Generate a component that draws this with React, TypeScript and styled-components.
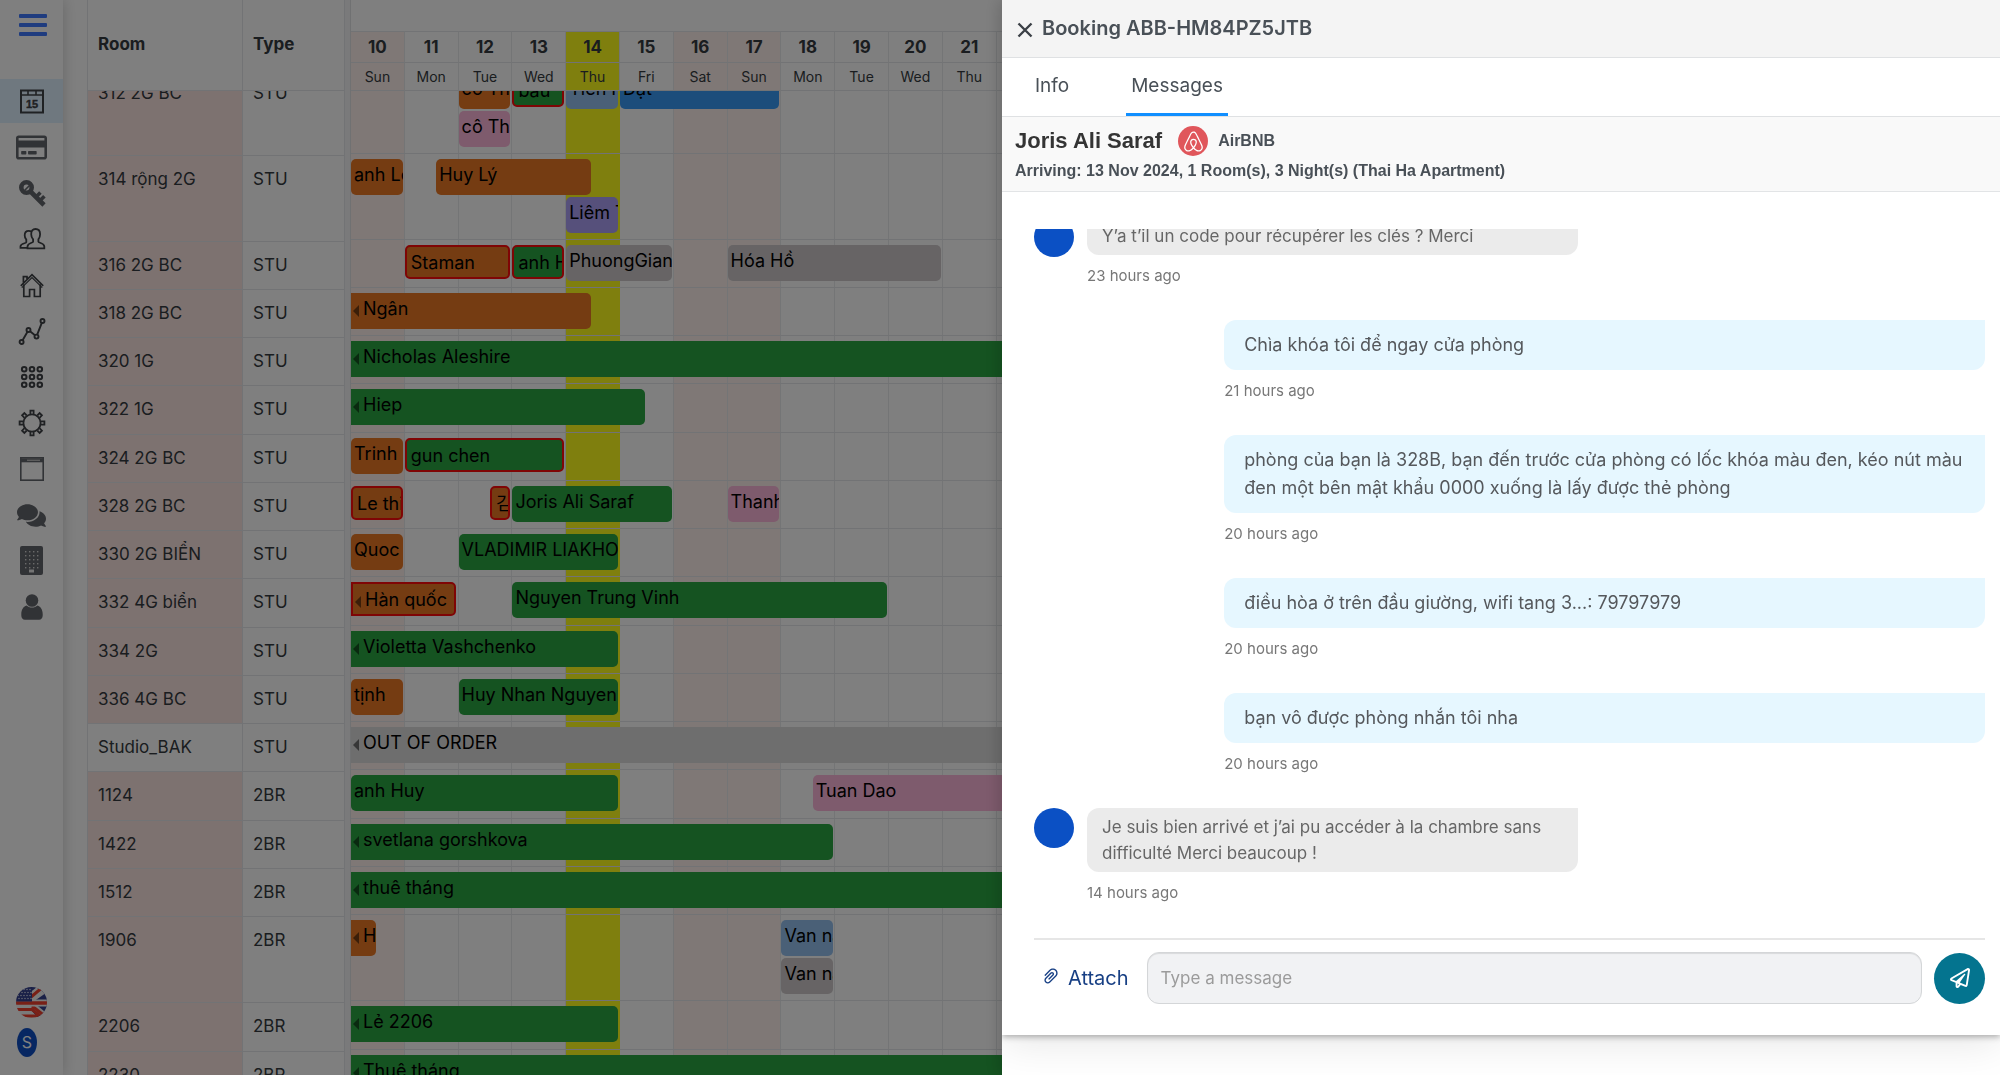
import React from "react";
import styled, { createGlobalStyle, css } from "styled-components";
import { FaAirbnb, FaComments, FaRegCreditCard, FaRegPaperPlane } from "react-icons/fa";
import { AiOutlinePaperClip } from "react-icons/ai";

const sans = `Inter, "Noto Sans CJK KR", sans-serif`;
const arial = `"Liberation Sans", Arial, sans-serif`;

const GlobalStyle = createGlobalStyle`
  *, *::before, *::after { box-sizing: border-box; }
  body { margin: 0; background: #fff; font-family: ${sans}; color: #343a40; }
  button, input { font: inherit; color: inherit; }
`;

/* ---------- page ---------- */

const Page = styled.div`
  display: flex;
  height: 100vh;
  overflow: hidden;
  isolation: isolate;
`;

const Backdrop = styled.div`
  position: fixed;
  z-index: 1;
  inset: 0;
  background: rgba(0, 0, 0, 0.5);
`;

/* ---------- sidebar ---------- */

const Sidebar = styled.nav`
  position: relative;
  z-index: 1;
  display: flex;
  flex: none;
  flex-direction: column;
  width: 63px;
  background: #fff;
  box-shadow: 0 0 14px rgba(0, 0, 0, 0.2);
`;

const MenuButton = styled.button`
  display: flex;
  flex-direction: column;
  gap: 5px;
  width: 28px;
  margin: 14px 0 43px 19px;
  padding: 0;
  border: 0;
  background: none;
`;

const MenuBar = styled.span`
  height: 4px;
  border-radius: 1px;
  background: #3f78ff;
`;

const NavLink = styled.a<{ $active?: boolean; $muted?: boolean }>`
  display: flex;
  align-items: center;
  justify-content: center;
  height: 44px;
  margin-bottom: 2px;
  color: ${(p) => (p.$muted ? "#63666c" : "#3f4246")};
  background: ${(p) => (p.$active ? "#dff0ff" : "transparent")};
`;

const SidebarFooter = styled.div`
  display: flex;
  flex-direction: column;
  gap: 10px;
  margin: auto 0 18px 16px;
`;

const PlainButton = styled.button`
  display: block;
  width: 31px;
  height: 31px;
  padding: 0;
  border: 0;
  background: none;
`;

const UserBadge = styled.button`
  width: 20px;
  height: 29px;
  margin-left: 1px;
  padding: 0;
  border: 0;
  border-radius: 50%;
  background: #0f4fc4;
  color: #fff;
  font-size: 16px;
  line-height: 29px;
`;

/* ---------- planner ---------- */

const Planner = styled.main`
  display: flex;
  flex: 1;
  min-width: 0;
  padding: 0 35px 0 24px;
`;

const rowSize = css<{ $lanes: number }>`
  height: ${(p) => 10 + p.$lanes * 38}px;
  border-bottom: 1px solid #e4e7ea;

  &:nth-child(4n + 6) {
    height: 49px;
  }
`;

const RoomTable = styled.table`
  display: block;
  flex: none;
  width: 258px;
  border-left: 1px solid #e4e7ea;
  font-size: 17px;
`;

const RoomHead = styled.thead`
  position: relative;
  z-index: 1;
  display: block;
  background: #fff;

  tr {
    display: grid;
    grid-template-columns: 155px 1fr;
    height: 91px;
    border-bottom: 1px solid #e4e7ea;
  }

  th {
    padding: 0 10px;
    border-right: 1px solid #e4e7ea;
    line-height: 88px;
    text-align: left;
    font-weight: 700;
  }
`;

const RoomBody = styled.tbody`
  display: block;
  margin-top: -21px;
`;

const RoomRow = styled.tr<{ $lanes: number }>`
  display: grid;
  grid-template-columns: 155px 1fr;
  ${rowSize}
`;

const RoomCell = styled.td<{ $dirty?: boolean }>`
  padding: 0 10px;
  border-right: 1px solid #e4e7ea;
  line-height: 46px;
  white-space: nowrap;
  background: ${(p) => (p.$dirty ? "#fbe4e1" : "#fff")};
`;

const Splitter = styled.div`
  flex: none;
  width: 6px;
  border-right: 1px solid #e0e2e4;
  background: #f4f5f6;
`;

const Timeline = styled.section`
  position: relative;
  flex: 1;
  min-width: 0;
`;

const DayGrid = styled.div`
  display: grid;
  grid-template-columns: repeat(30, 1fr);
`;

const ColumnLayer = styled(DayGrid)`
  position: absolute;
  inset: 31px 0 0;
`;

type DayKind = "weekend" | "today" | "plain";
const dayColor = { weekend: "#fff1ed", today: "#ffff1c", plain: "#fff" };

const DayColumn = styled.div<{ $kind: DayKind }>`
  border-right: 1px solid ${(p) => (p.$kind === "today" ? "#ffff1c" : "#e8eaec")};
  background: ${(p) => dayColor[p.$kind]};
`;

const TimelineHead = styled.header`
  position: relative;
  z-index: 1;
  padding-top: 31px;
  background: #fff;
`;

const DayNumber = styled.div<{ $kind: DayKind }>`
  height: 31px;
  border-top: 1px solid #e4e7ea;
  border-right: 1px solid #e8eaec;
  background: ${(p) => dayColor[p.$kind]};
  font-size: 17px;
  font-weight: 700;
  line-height: 30px;
  text-align: center;
`;

const DayName = styled(DayNumber)`
  height: 29px;
  border-bottom: 1px solid #e4e7ea;
  font-size: 14px;
  font-weight: 400;
  line-height: 28px;
`;

const TimelineBody = styled.div`
  position: relative;
  margin-top: -23px;
`;

const Lanes = styled.div<{ $lanes: number }>`
  display: grid;
  grid-template-columns: repeat(720, 1fr);
  grid-auto-rows: 36px;
  row-gap: 2px;
  padding-top: 5px;
  ${rowSize}
`;

const barColor = {
  orange: "#ea7824",
  green: "#2aa742",
  pink: "#fdb6da",
  purple: "#aca0f6",
  grey: "#cec9cb",
  closed: "#dcdcdc",
  sky: "#94c0ef",
  blue: "#389af6",
};

const Bar = styled.button<{ $tone: keyof typeof barColor; $alert?: boolean; $open?: boolean }>`
  display: flex;
  align-items: center;
  min-width: 0;
  height: ${(p) => (p.$alert ? 34 : 36)}px;
  padding: ${(p) => (p.$alert ? "1px 0 0 4px" : "0 0 5px 3px")};
  overflow: hidden;
  border: ${(p) => (p.$alert ? "2px solid #ff0a0a" : "0")};
  border-radius: ${(p) => (p.$open ? "0 5px 5px 0" : "5px")};
  background: ${(p) => barColor[p.$tone]};
  color: #000;
  font-size: 18px;
  line-height: 28px;
  white-space: nowrap;

  ${(p) =>
    p.$open &&
    css`
      padding-left: 2px;

      &::before {
        content: "";
        flex: none;
        margin: 5px 4px 0 0;
        border: solid transparent;
        border-width: 6px 6px 6px 0;
        border-right-color: rgba(0, 0, 0, 0.5);
      }
    `}
`;

/* ---------- drawer ---------- */

const Drawer = styled.aside`
  position: fixed;
  z-index: 2;
  inset: 0 0 0 auto;
  width: 49.9%;
  overflow: hidden;
  background: #fff;
  box-shadow: -4px 0 14px rgba(0, 0, 0, 0.15);
`;

const Card = styled.div`
  padding-bottom: 31px;
  background: #fff;
  box-shadow: 0 2px 6px rgba(0, 0, 0, 0.3), 0 8px 40px rgba(0, 0, 0, 0.1);
`;

const DrawerHead = styled.header`
  display: flex;
  align-items: center;
  gap: 9px;
  height: 58px;
  padding: 0 15px;
  border-bottom: 1px solid #dfe1e3;
  background: #f4f4f4;
`;

const CloseButton = styled.button`
  display: flex;
  padding: 3px 0 0;
  border: 0;
  background: none;
`;

const DrawerTitle = styled.h1`
  margin: 0 0 2px;
  color: #495057;
  font-size: 20px;
  font-weight: 600;
  line-height: 28px;
`;

const Tabs = styled.div`
  display: flex;
  gap: 52px;
  height: 59px;
  padding-left: 28px;
  border-bottom: 1px solid #dfe1e3;
`;

const Tab = styled.button<{ $active?: boolean }>`
  height: 58px;
  padding: 0 5px;
  border: 0;
  border-bottom: 3px solid ${(p) => (p.$active ? "#118fff" : "transparent")};
  background: none;
  color: #495057;
  font-size: 19px;
`;

const Guest = styled.section`
  height: 75px;
  padding: 9px 13px 0;
  border-bottom: 1px solid #e2e4e6;
  background: #f9f9f9;
  color: #495057;
  font-family: ${arial};
  font-weight: 700;
`;

const GuestLine = styled.div`
  display: flex;
  align-items: center;
  height: 30px;
`;

const GuestName = styled.h2`
  margin: 0 16px 0 0;
  color: #343434;
  font-size: 22px;
`;

const ChannelLogo = styled.span`
  display: flex;
  align-items: center;
  justify-content: center;
  width: 30px;
  height: 30px;
  margin-right: 10px;
  border-radius: 50%;
  background: #e0565b;
  color: #fff;
`;

const Channel = styled.span`
  font-size: 16px;
`;

const Arrival = styled.p`
  margin: 5px 0 0;
  font-size: 16px;
  line-height: 20px;
`;

const Chat = styled.section`
  margin: 37px 15px 0 32px;
`;

const MessageScroll = styled.div`
  overflow: hidden;
  border-bottom: 2px solid #e6e6e6;
`;

const MessageList = styled.ol`
  display: flex;
  flex-direction: column;
  gap: 33px;
  margin: -12px 0 34px;
  padding: 0;
  list-style: none;
`;

const Message = styled.li<{ $own?: boolean }>`
  display: flex;
  gap: 13px;
  ${(p) => p.$own && "align-self: flex-end; width: 80%;"}
`;

const Avatar = styled.span`
  flex: none;
  width: 40px;
  height: 40px;
  border-radius: 50%;
  background: #0b50c4;
`;

const MessageBody = styled.div<{ $own?: boolean }>`
  flex: 1;
  max-width: ${(p) => (p.$own ? "none" : "491px")};
`;

const Bubble = styled.p<{ $own?: boolean }>`
  margin: 0;
  padding: ${(p) => (p.$own ? "11px 20px" : "6px 15px")};
  border-radius: 12px 0 12px 12px;
  background: ${(p) => (p.$own ? "#e6f7ff" : "#ebebeb")};
  color: ${(p) => (p.$own ? "#55585c" : "#666")};
  font-size: ${(p) => (p.$own ? 18 : 17)}px;
  line-height: ${(p) => (p.$own ? 28 : 26)}px;
`;

const Time = styled.time`
  display: block;
  margin-top: 10px;
  color: #777;
  font-size: 15px;
  line-height: 22px;
`;

const Composer = styled.form`
  display: flex;
  align-items: center;
  gap: 12px;
  padding-top: 12px;
`;

const AttachButton = styled.button`
  display: flex;
  align-items: center;
  gap: 7px;
  padding: 0 6px 0 7px;
  border: 0;
  background: none;
  color: #173f84;
  font-size: 20px;

  svg {
    margin-bottom: 4px;
  }
`;

const MessageInput = styled.input`
  flex: 1;
  min-width: 0;
  height: 52px;
  padding: 0 13px;
  border: 1px solid #d4d6d8;
  border-radius: 12px;
  background: #f1f2f4;
  box-shadow: inset 0 1px 1px rgba(0, 0, 0, 0.1);
  font-size: 17px;

  &::placeholder {
    color: #9b9b9b;
  }
`;

const SendButton = styled.button`
  display: flex;
  align-items: center;
  justify-content: center;
  width: 51px;
  height: 51px;
  padding: 0;
  border: 0;
  border-radius: 50%;
  background: #04748f;
  color: #fff;
`;

/* ---------- icons ---------- */

const Line = ({ size = 28, width = 2, children }: { size?: number; width?: number; children: React.ReactNode }) => (
  <svg width={size} height={size} viewBox="0 0 28 28" fill="none" stroke="currentColor" strokeWidth={width} aria-hidden>
    {children}
  </svg>
);

const CalendarIcon = () => (
  <Line>
    <rect x="3" y="3.5" width="22" height="22" />
    <path d="M3 8h22M10 3v5M18 3v5" strokeWidth="1.6" />
    <text x="14" y="21" textAnchor="middle" fontSize="11" fontWeight="700" fill="currentColor" strokeWidth="0.4" fontFamily="Liberation Sans, Arial, sans-serif">
      15
    </text>
  </Line>
);

const KeyIcon = () => (
  <Line>
    <circle cx="8.5" cy="8.5" r="5.2" strokeWidth="4.6" />
    <path d="M5.5 12.5l7.5-7.5" strokeWidth="1.6" />
    <path d="M12.5 12.5L26 26" strokeWidth="4.6" />
    <path d="M18 18l4.4-4.4M21.8 21.8l4.6-4.6" strokeWidth="3.6" />
  </Line>
);

const UsersIcon = () => (
  <Line width={1.8}>
    <path d="M17.5 4c3 0 4.600 2 4.600 5.200 0 2.200-.8 4-1.700 5.200v2.400c0 1 5.900 1.300 5.900 4.600v1.900H9.500v-1.900c0-3.300 5.600-3.600 5.600-4.600v-2.400c-1-1.200-1.900-3-1.900-5.200C13.200 6 14.600 4 17.500 4z" />
    <path d="M13.400 6.700c-.7-.7-1.700-.9-2.700-.9-2.600 0-4 1.700-4 4.500 0 1.900.7 3.400 1.600 4.400v2.600c0 .9-5.800 1.300-5.800 3.900v1.700h7" />
  </Line>
);

const HomeIcon = () => (
  <Line width={1.7}>
    <path d="M2.800 14.800L14 3.700l11.200 11.100M5.800 13.500v12h5.800v-7h4.800v7h5.800v-12M5.400 11.500V5.700h3.600v2.400" />
    <path d="M3.800 16.600L14 6.600l10.200 10" strokeWidth="1.2" />
  </Line>
);

const ChartIcon = () => (
  <Line width={1.9}>
    <circle cx="3.600" cy="25" r="2" />
    <circle cx="10.500" cy="13" r="2" />
    <circle cx="18.500" cy="19.600" r="2" />
    <circle cx="24.500" cy="4" r="2" />
    <path d="M4.600 23.200l4.900-8.400M12 14.300l5 4M19.200 17.700l4.600-11.800" />
  </Line>
);

const GridIcon = () => (
  <Line width={2}>
    {[6.2, 14, 21.8].map((y) => [6.2, 14, 21.8].map((x) => <circle key={`${x}-${y}`} cx={x} cy={y} r="2.300" />))}
  </Line>
);

const GearIcon = () => (
  <Line>
    <circle cx="14" cy="14" r="8.600" strokeWidth="1.800" />
    {[0, 45, 90, 135, 180, 225, 270, 315].map((a) => (
      <path key={a} d="M12.400 5V1.600h3.200V5" strokeWidth="1.800" transform={`rotate(${a} 14 14)`} />
    ))}
  </Line>
);

const WindowIcon = () => (
  <Line width={1.6}>
    <rect x="2.800" y="2.800" width="22.400" height="22.400" />
    <path d="M3 5.300h22" strokeWidth="4" />
    <path d="M9 5.300h13" stroke="#bbb" strokeWidth="1.400" />
  </Line>
);

const BuildingIcon = () => (
  <svg width="24" height="30" viewBox="0 0 24 30" aria-hidden>
    <rect width="23" height="29" rx="2" fill="currentColor" />
    {[5.5, 9.500, 13.500, 17.500, 21.500].map((y) =>
      [5.500, 9.500, 13.500, 17.500].map((x) => <rect key={`${x}-${y}`} x={x - 0.5} y={y - 0.5} width="1.400" height="1.400" fill="#d4d4d4" />)
    )}
    <rect x="9" y="23.500" width="5" height="3" fill="#e8e8e8" />
  </svg>
);

const PersonIcon = () => (
  <svg width="22" height="26" viewBox="0 0 22 26" fill="currentColor" aria-hidden>
    <circle cx="11" cy="6.500" r="6.300" />
    <path d="M5.500 11.500c1.400 1.300 3.300 2.100 5.500 2.100s4.100-.8 5.500-2.100c3.300 1 5.200 4.500 5.200 8.600v1.500c0 2.400-1.500 4.200-3.600 4.200H3.900C1.800 25.800.3 24 .3 21.600v-1.500c0-4.100 1.900-7.600 5.200-8.600z" />
  </svg>
);

const FlagIcon = () => (
  <svg width="31" height="31" viewBox="0 0 31 31" aria-hidden>
    <defs>
      <clipPath id="flag-disc">
        <circle cx="15.500" cy="15.500" r="15.500" />
      </clipPath>
    </defs>
    <g clipPath="url(#flag-disc)">
      <rect width="31" height="31" fill="#f4f4f4" />
      <path d="M16 0h15v31H22L16 24z" fill="#34408f" />
      <path d="M15 13L31 2M15 17l16 13M14 9L28-2" stroke="#f4f4f4" strokeWidth="5.500" />
      <path d="M15 10L28-1M16 19l14 11" stroke="#f0402f" strokeWidth="3" />
      <path d="M15 16h16" stroke="#f4f4f4" strokeWidth="7" />
      <path d="M0 16h31" stroke="#f0402f" strokeWidth="3.600" />
      <path d="M0 22.500h16l10 8M4 29h18" stroke="#f0402f" strokeWidth="3" fill="none" />
      <rect width="16" height="14.500" fill="#34408f" />
      {[2.500, 5.500, 8.500, 11.500].map((y, r) =>
        [2, 5, 8, 11, 14].map((x) => <circle key={`${x}-${y}`} cx={x + (r % 2)} cy={y} r="0.700" fill="#e8e8f4" />)
      )}
    </g>
  </svg>
);

const CloseIcon = () => (
  <svg width="16" height="16" viewBox="0 0 16 16" fill="none" stroke="#3b4046" strokeWidth="2.400" aria-hidden>
    <path d="M1.500 1.500l13 13M14.500 1.500l-13 13" />
  </svg>
);

/* ---------- data ---------- */

type Booking = {
  name: string;
  from: number;
  to: number;
  tone: keyof typeof barColor;
  lane?: number;
  alert?: boolean;
  open?: boolean;
};

type Room = { room: string; type: string; lanes?: number; clean?: boolean; bookings: Booking[] };

const END = 30;

const rooms: Room[] = [
  {
    room: "312 2G BC",
    type: "STU",
    lanes: 2,
    bookings: [
      { name: "cô Thảo", from: 2, to: 2.96, tone: "orange" },
      { name: "báu", from: 3, to: 3.96, tone: "green", alert: true },
      { name: "Tiến Hưng", from: 4, to: 4.96, tone: "sky" },
      { name: "Đạt", from: 5, to: 7.96, tone: "blue" },
      { name: "cô Thảo", from: 2, to: 2.96, tone: "pink", lane: 2 },
    ],
  },
  {
    room: "314 rộng 2G",
    type: "STU",
    lanes: 2,
    bookings: [
      { name: "anh Lê", from: 0, to: 0.96, tone: "orange" },
      { name: "Huy Lý", from: 1.58, to: 4.46, tone: "orange" },
      { name: "Liêm Trần", from: 4, to: 4.96, tone: "purple", lane: 2 },
    ],
  },
  {
    room: "316 2G BC",
    type: "STU",
    bookings: [
      { name: "Staman", from: 1, to: 2.96, tone: "orange", alert: true },
      { name: "anh Hải", from: 3, to: 3.96, tone: "green", alert: true },
      { name: "PhuongGiang", from: 4, to: 5.96, tone: "grey" },
      { name: "Hóa Hồ", from: 7, to: 10.96, tone: "grey" },
    ],
  },
  { room: "318 2G BC", type: "STU", bookings: [{ name: "Ngân", from: 0, to: 4.46, tone: "orange", open: true }] },
  { room: "320 1G", type: "STU", bookings: [{ name: "Nicholas Aleshire", from: 0, to: END, tone: "green", open: true }] },
  { room: "322 1G", type: "STU", bookings: [{ name: "Hiep", from: 0, to: 5.46, tone: "green", open: true }] },
  {
    room: "324 2G BC",
    type: "STU",
    bookings: [
      { name: "Trinh", from: 0, to: 0.96, tone: "orange" },
      { name: "gun chen", from: 1, to: 3.96, tone: "green", alert: true },
    ],
  },
  {
    room: "328 2G BC",
    type: "STU",
    bookings: [
      { name: "Le thi", from: 0, to: 0.96, tone: "orange", alert: true },
      { name: "김", from: 2.58, to: 2.96, tone: "orange", alert: true },
      { name: "Joris Ali Saraf", from: 3, to: 5.96, tone: "green" },
      { name: "Thanh", from: 7, to: 7.96, tone: "pink" },
    ],
  },
  {
    room: "330 2G BIỂN",
    type: "STU",
    bookings: [
      { name: "Quoc", from: 0, to: 0.96, tone: "orange" },
      { name: "VLADIMIR LIAKHOV", from: 2, to: 4.96, tone: "green" },
    ],
  },
  {
    room: "332 4G biển",
    type: "STU",
    bookings: [
      { name: "Hàn quốc", from: 0, to: 1.96, tone: "orange", alert: true, open: true },
      { name: "Nguyen Trung Vinh", from: 3, to: 9.96, tone: "green" },
    ],
  },
  { room: "334 2G", type: "STU", bookings: [{ name: "Violetta Vashchenko", from: 0, to: 4.96, tone: "green", open: true }] },
  {
    room: "336 4G BC",
    type: "STU",
    bookings: [
      { name: "tịnh", from: 0, to: 0.96, tone: "orange" },
      { name: "Huy Nhan Nguyen", from: 2, to: 4.96, tone: "green" },
    ],
  },
  { room: "Studio_BAK", type: "STU", clean: true, bookings: [{ name: "OUT OF ORDER", from: 0, to: END, tone: "closed", open: true }] },
  {
    room: "1124",
    type: "2BR",
    bookings: [
      { name: "anh Huy", from: 0, to: 4.96, tone: "green" },
      { name: "Tuan Dao", from: 8.58, to: 14, tone: "pink" },
    ],
  },
  { room: "1422", type: "2BR", bookings: [{ name: "svetlana gorshkova", from: 0, to: 8.96, tone: "green", open: true }] },
  { room: "1512", type: "2BR", bookings: [{ name: "thuê tháng", from: 0, to: END, tone: "green", open: true }] },
  {
    room: "1906",
    type: "2BR",
    lanes: 2,
    bookings: [
      { name: "Hà", from: 0, to: 0.46, tone: "orange", open: true },
      { name: "Van nam", from: 8, to: 8.96, tone: "sky" },
      { name: "Van nam", from: 8, to: 8.96, tone: "grey", lane: 2 },
    ],
  },
  { room: "2206", type: "2BR", bookings: [{ name: "Lẻ 2206", from: 0, to: 4.96, tone: "green", open: true }] },
  { room: "2230", type: "2BR", bookings: [{ name: "Thuê tháng", from: 0, to: END, tone: "green", open: true }] },
];

const weekdays = ["Sun", "Mon", "Tue", "Wed", "Thu", "Fri", "Sat"];

const days = Array.from({ length: 30 }, (_, i) => {
  const name = weekdays[i % 7];
  const kind: DayKind = i === 4 ? "today" : name === "Sun" || name === "Sat" ? "weekend" : "plain";
  return { number: ((i + 9) % 30) + 1, name, kind };
});

const navItems = [
  { label: "Calendar", icon: <CalendarIcon />, active: true },
  { label: "Payments", icon: <FaRegCreditCard size={31} />, muted: true },
  { label: "Keys", icon: <KeyIcon />, muted: true },
  { label: "Guests", icon: <UsersIcon /> },
  { label: "Home", icon: <HomeIcon /> },
  { label: "Reports", icon: <ChartIcon /> },
  { label: "Apps", icon: <GridIcon /> },
  { label: "Settings", icon: <GearIcon /> },
  { label: "Website", icon: <WindowIcon />, muted: true },
  { label: "Messages", icon: <FaComments size={29} />, muted: true },
  { label: "Property", icon: <BuildingIcon />, muted: true },
  { label: "Account", icon: <PersonIcon />, muted: true },
];

const messages = [
  { text: "Y’a t’il un code pour récupérer les clés ? Merci", time: "23 hours ago" },
  { own: true, text: "Chìa khóa tôi để ngay cửa phòng", time: "21 hours ago" },
  {
    own: true,
    text: "phòng của bạn là 328B, bạn đến trước cửa phòng có lốc khóa màu đen, kéo nút màu đen một bên mật khẩu 0000 xuống là lấy được thẻ phòng",
    time: "20 hours ago",
  },
  { own: true, text: "điều hòa ở trên đầu giường, wifi tang 3...: 79797979", time: "20 hours ago" },
  { own: true, text: "bạn vô được phòng nhắn tôi nha", time: "20 hours ago" },
  { text: "Je suis bien arrivé et j’ai pu accéder à la chambre sans difficulté Merci beaucoup !", time: "14 hours ago" },
];

const hour = (day: number) => Math.round(day * 24) + 1;

/* ---------- views ---------- */

const SideNav = () => (
  <Sidebar>
    <MenuButton aria-label="Menu">
      <MenuBar />
      <MenuBar />
      <MenuBar />
    </MenuButton>
    {navItems.map((item) => (
      <NavLink key={item.label} href="#" aria-label={item.label} $active={item.active} $muted={item.muted}>
        {item.icon}
      </NavLink>
    ))}
    <SidebarFooter>
      <PlainButton aria-label="Language">
        <FlagIcon />
      </PlainButton>
      <UserBadge>S</UserBadge>
    </SidebarFooter>
  </Sidebar>
);

const Rooms = () => (
  <RoomTable>
    <RoomHead>
      <tr>
        <th scope="col">Room</th>
        <th scope="col">Type</th>
      </tr>
    </RoomHead>
    <RoomBody>
      {rooms.map((r) => (
        <RoomRow key={r.room} $lanes={r.lanes ?? 1}>
          <RoomCell $dirty={!r.clean}>{r.room}</RoomCell>
          <RoomCell>{r.type}</RoomCell>
        </RoomRow>
      ))}
    </RoomBody>
  </RoomTable>
);

const Schedule = () => (
  <Timeline>
    <ColumnLayer>
      {days.map((d, i) => (
        <DayColumn key={i} $kind={d.kind} />
      ))}
    </ColumnLayer>
    <TimelineHead>
      <DayGrid>
        {days.map((d, i) => (
          <DayNumber key={i} $kind={d.kind}>
            {d.number}
          </DayNumber>
        ))}
        {days.map((d, i) => (
          <DayName key={i} $kind={d.kind}>
            {d.name}
          </DayName>
        ))}
      </DayGrid>
    </TimelineHead>
    <TimelineBody>
      {rooms.map((r) => (
        <Lanes key={r.room} $lanes={r.lanes ?? 1}>
          {r.bookings.map((b, i) => (
            <Bar
              key={i}
              $tone={b.tone}
              $alert={b.alert}
              $open={b.open}
              style={{ gridColumn: `${hour(b.from)} / ${hour(b.to)}`, gridRow: b.lane ?? 1 }}
            >
              {b.name}
            </Bar>
          ))}
        </Lanes>
      ))}
    </TimelineBody>
  </Timeline>
);

const BookingDrawer = () => (
  <Drawer>
    <Card>
      <DrawerHead>
        <CloseButton aria-label="Close">
          <CloseIcon />
        </CloseButton>
        <DrawerTitle>Booking ABB-HM84PZ5JTB</DrawerTitle>
      </DrawerHead>
      <Tabs role="tablist">
        <Tab role="tab">Info</Tab>
        <Tab role="tab" aria-selected $active>
          Messages
        </Tab>
      </Tabs>
      <Guest>
        <GuestLine>
          <GuestName>Joris Ali Saraf</GuestName>
          <ChannelLogo>
            <FaAirbnb size={23} />
          </ChannelLogo>
          <Channel>AirBNB</Channel>
        </GuestLine>
        <Arrival>Arriving: 13 Nov 2024, 1 Room(s), 3 Night(s) (Thai Ha Apartment)</Arrival>
      </Guest>
      <Chat>
        <MessageScroll>
          <MessageList>
            {messages.map((m, i) => (
              <Message key={i} $own={m.own}>
                {!m.own && <Avatar />}
                <MessageBody $own={m.own}>
                  <Bubble $own={m.own}>{m.text}</Bubble>
                  <Time>{m.time}</Time>
                </MessageBody>
              </Message>
            ))}
          </MessageList>
        </MessageScroll>
        <Composer onSubmit={(e) => e.preventDefault()}>
          <AttachButton type="button">
            <AiOutlinePaperClip size={20} />
            Attach
          </AttachButton>
          <MessageInput type="text" aria-label="Message" placeholder="Type a message" />
          <SendButton type="submit" aria-label="Send">
            <FaRegPaperPlane size={20} />
          </SendButton>
        </Composer>
      </Chat>
    </Card>
  </Drawer>
);

export default function App() {
  return (
    <>
      <GlobalStyle />
      <Page>
        <SideNav />
        <Planner>
          <Rooms />
          <Splitter />
          <Schedule />
        </Planner>
      </Page>
      <Backdrop />
      <BookingDrawer />
    </>
  );
}
